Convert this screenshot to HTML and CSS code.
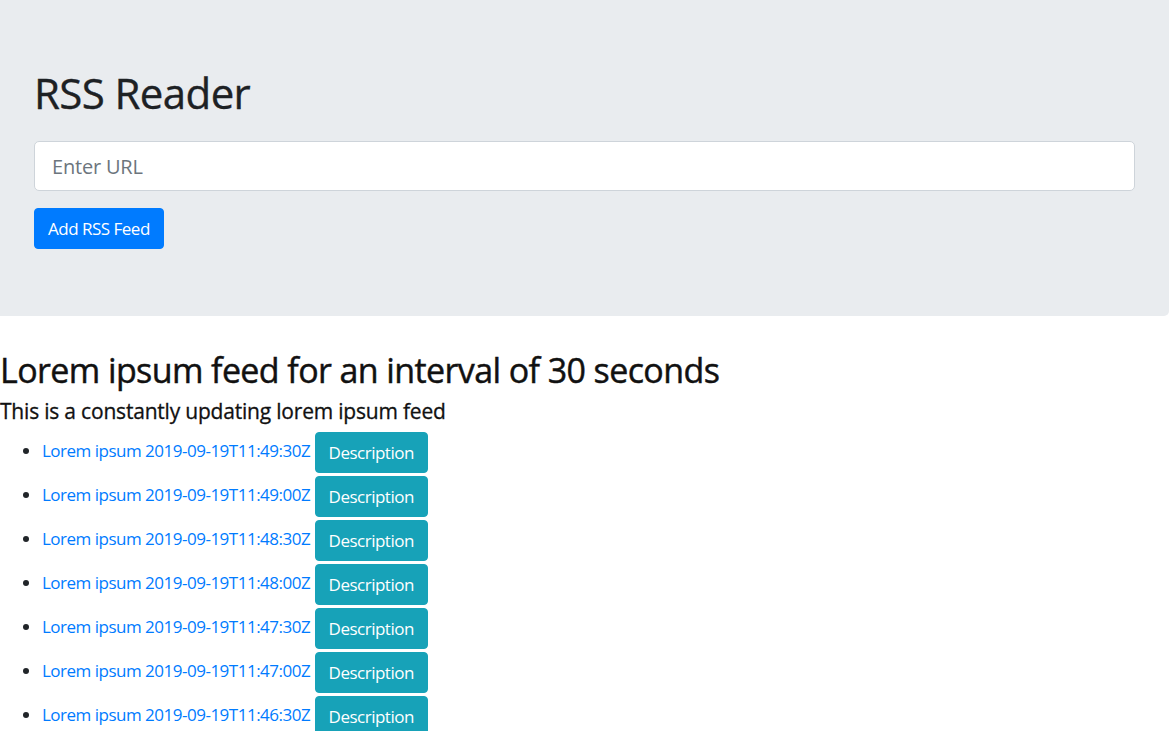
FILE: index.html
```html
<!DOCTYPE html>
<html lang="en">
<head>
<meta charset="utf-8">
<title>RSS Reader</title>
<link rel="stylesheet" href="styles.css">
</head>
<body>
  <div class="jumbotron">
    <h1 class="title">RSS Reader</h1>
    <form class="feed-form">
      <div class="form-group">
        <input class="form-control" type="text" placeholder="Enter URL">
      </div>
      <button type="button" class="btn btn-primary">Add RSS Feed</button>
    </form>
  </div>
  <h2 class="feed-title">Lorem ipsum feed for an interval of 30 seconds</h2>
  <h5 class="feed-desc">This is a constantly updating lorem ipsum feed</h5>
  <ul class="feed-list">
    <li><a href="#">Lorem ipsum 2019-09-19T11:49:30Z</a> <button type="button" class="btn btn-info">Description</button></li>
    <li><a href="#">Lorem ipsum 2019-09-19T11:49:00Z</a> <button type="button" class="btn btn-info">Description</button></li>
    <li><a href="#">Lorem ipsum 2019-09-19T11:48:30Z</a> <button type="button" class="btn btn-info">Description</button></li>
    <li><a href="#">Lorem ipsum 2019-09-19T11:48:00Z</a> <button type="button" class="btn btn-info">Description</button></li>
    <li><a href="#">Lorem ipsum 2019-09-19T11:47:30Z</a> <button type="button" class="btn btn-info">Description</button></li>
    <li><a href="#">Lorem ipsum 2019-09-19T11:47:00Z</a> <button type="button" class="btn btn-info">Description</button></li>
    <li><a href="#">Lorem ipsum 2019-09-19T11:46:30Z</a> <button type="button" class="btn btn-info">Description</button></li>
    <li><a href="#">Lorem ipsum 2019-09-19T11:46:00Z</a> <button type="button" class="btn btn-info">Description</button></li>
  </ul>
</body>
</html>
```
FILE: styles.css
```css
html { font-size: 17px; }
body {
  margin: 0;
  font-family: "Open Sans", "Noto Sans", "Liberation Sans", sans-serif;
  font-size: 1rem;
  line-height: 1.5;
  color: #212529;
  background: #fff;
}
.jumbotron {
  background: #e9ecef;
  padding: 68px 34px 67px;
  margin: 0 1px 34px 0;
  border-radius: 0 0 5px 0;
}
.title {
  margin: 0 0 23px;
  font-size: 42px;
  font-weight: 400;
  line-height: 1.2;
  letter-spacing: -0.6px;
  color: #1d2124;
  -webkit-text-stroke: 0.35px #1d2124;
}
.feed-form { margin: 0; }
.form-group { margin-bottom: 17px; }
.form-control {
  display: block;
  box-sizing: border-box;
  width: 100%;
  height: 50px;
  padding: 8px 17px;
  font-family: inherit;
  font-size: 20px;
  letter-spacing: -0.2px;
  color: #495057;
  background: #fff;
  border: 1px solid #ced4da;
  border-radius: 5px;
  outline: none;
}
.form-control::placeholder { color: #6c757d; }
.btn {
  display: inline-block;
  box-sizing: border-box;
  font-family: inherit;
  font-size: 17px;
  line-height: 1.5;
  letter-spacing: -0.5px;
  padding: 6px 13px;
  height: 41px;
  border: 1px solid transparent;
  border-radius: 4px;
  color: #fff;
  vertical-align: middle;
  cursor: pointer;
}
.btn-primary { background: #007bff; border-color: #007bff; }
.btn-info { background: #17a2b8; border-color: #17a2b8; }
.feed-title {
  margin: 0 0 8px;
  font-size: 34px;
  font-weight: 500;
  line-height: 1.2;
  letter-spacing: -0.6px;
  color: #111;
  -webkit-text-stroke: 0.45px #111;
}
.feed-desc {
  margin: 0 0 8px;
  font-size: 21px;
  font-weight: 500;
  line-height: 1.2;
  letter-spacing: -0.2px;
  color: #111;
  -webkit-text-stroke: 0.3px #111;
}
.feed-list {
  margin: 0;
  padding-left: 42px;
}
.feed-list li { margin-bottom: 3px; }
.feed-list a { color: #007bff; text-decoration: none; letter-spacing: -0.5px; }
```
